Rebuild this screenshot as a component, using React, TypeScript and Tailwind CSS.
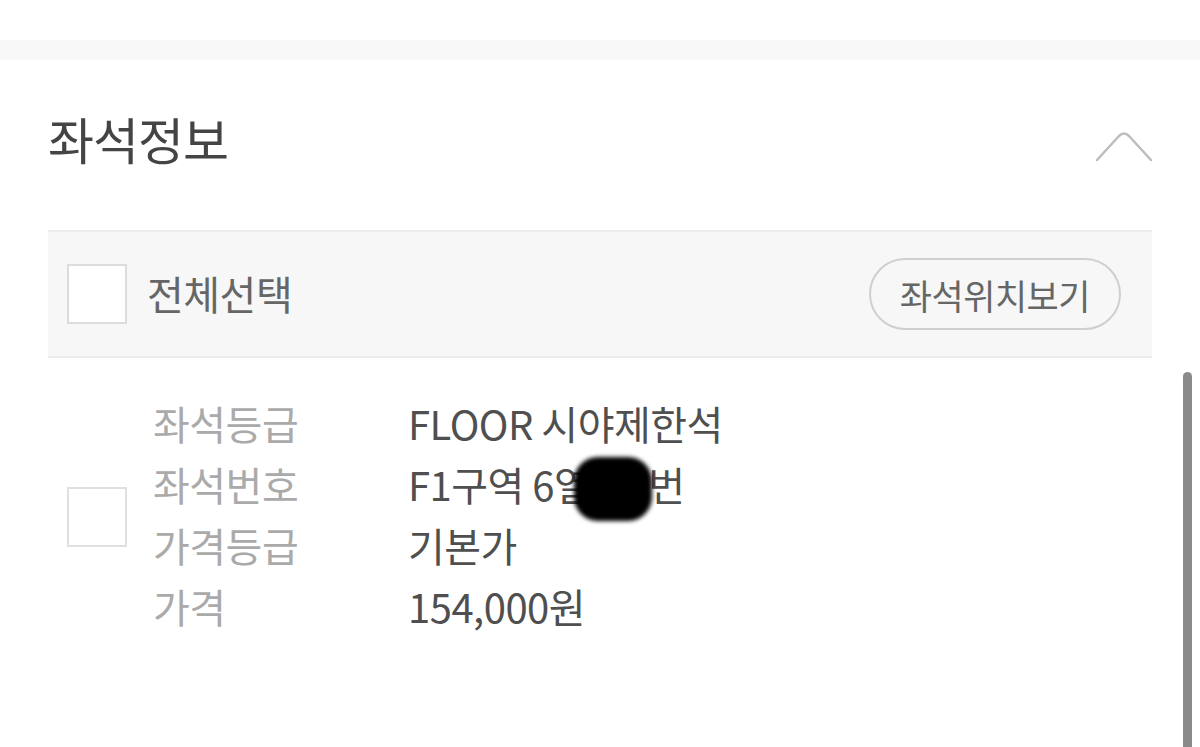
export default function App() {
  const rows = [
    { label: '좌석등급', value: 'FLOOR 시야제한석' },
    { label: '좌석번호', value: 'seat' },
    { label: '가격등급', value: '기본가' },
    { label: '가격', value: '154,000원' },
  ];

  return (
    <div
      className="relative w-[1200px] h-[747px] overflow-hidden bg-white"
      style={{ fontFamily: '"Noto Sans CJK KR", "Noto Sans", sans-serif' }}
    >
      {/* 상단 구분 띠 */}
      <div className="h-[40px] bg-white" />
      <div className="h-[20px] bg-[#f8f8f8]" />

      <div className="px-[48px]">
        {/* 제목 */}
        <div className="flex items-center justify-between h-[170px]">
          <h2 className="text-[50px] leading-none text-[#444] tracking-[-1px] mb-[14px]">좌석정보</h2>
          <svg width="60" height="34" viewBox="0 0 60 34" className="mr-[-2px] mt-[4px]">
            <path d="M3 30 L25 6 Q30 1 35 6 L57 30" fill="none" stroke="#bdbdbd" strokeWidth="2.5" strokeLinecap="round" />
          </svg>
        </div>

        {/* 전체선택 바 */}
        <div className="flex items-center justify-between h-[128px] bg-[#f7f7f7] border-t-2 border-b-2 border-[#ececec] pl-[19px] pr-[31px]">
          <div className="flex items-center gap-[20px]">
            <div className="w-[60px] h-[60px] bg-white border-2 border-[#dcdcdc]" />
            <span className="text-[40px] leading-none text-[#666] mb-[2px] tracking-[-0.5px]">전체선택</span>
          </div>
          <button className="h-[72px] px-[29px] rounded-full border-2 border-[#cfcfcf] text-[35px] leading-none text-[#666] bg-[#f7f7f7] tracking-[-0.5px]">
            좌석위치보기
          </button>
        </div>

        {/* 좌석 상세 */}
        <div className="flex items-center pl-[19px] pt-[34px]">
          <div className="w-[60px] h-[60px] bg-white border-2 border-[#e0e0e0] mt-[6px]" />
          <div className="ml-[26px] flex flex-col">
            {rows.map((r) => (
              <div key={r.label} className="flex items-center h-[61px] text-[40px] leading-none tracking-[-0.5px]">
                <span className="w-[255px] text-[#aaa]">{r.label}</span>
                <span className="text-[#4f4f4f] flex items-center">
                  {r.value === 'seat' ? (
                    <>
                      F1구역 6열
                      <span className="inline-block w-[78px] h-[64px] -ml-[16px] -mr-[4px] rounded-[24px] bg-black blur-[2px] relative top-[5px]" />
                      번
                    </>
                  ) : (
                    r.value
                  )}
                </span>
              </div>
            ))}
          </div>
        </div>
      </div>

      {/* 스크롤바 */}
      <div className="absolute left-[1183px] top-[372px] w-[9px] h-[400px] rounded-full bg-[#8a8a8a]" />
    </div>
  );
}
